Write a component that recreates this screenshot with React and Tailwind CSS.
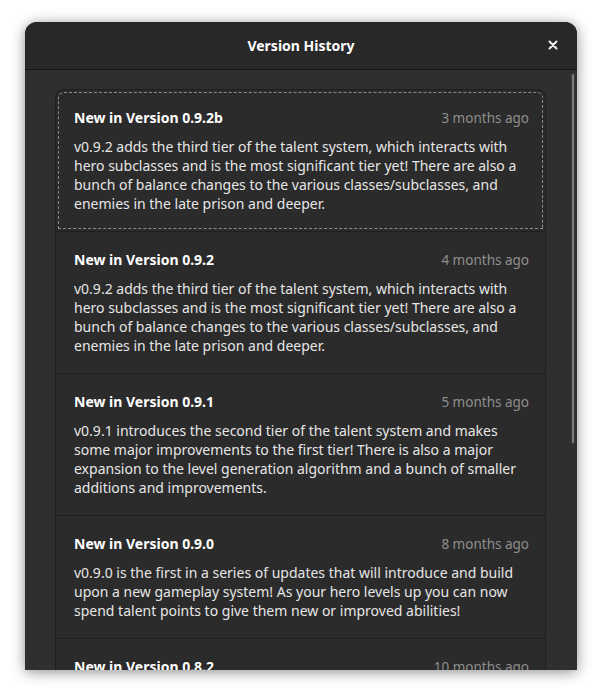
import React from 'react';

const versions = [
  {
    title: 'New in Version 0.9.2b',
    when: '3 months ago',
    body: 'v0.9.2 adds the third tier of the talent system, which interacts with hero subclasses and is the most significant tier yet! There are also a bunch of balance changes to the various classes/subclasses, and enemies in the late prison and deeper.',
    focused: true,
  },
  {
    title: 'New in Version 0.9.2',
    when: '4 months ago',
    body: 'v0.9.2 adds the third tier of the talent system, which interacts with hero subclasses and is the most significant tier yet! There are also a bunch of balance changes to the various classes/subclasses, and enemies in the late prison and deeper.',
  },
  {
    title: 'New in Version 0.9.1',
    when: '5 months ago',
    body: 'v0.9.1 introduces the second tier of the talent system and makes some major improvements to the first tier! There is also a major expansion to the level generation algorithm and a bunch of smaller additions and improvements.',
  },
  {
    title: 'New in Version 0.9.0',
    when: '8 months ago',
    body: 'v0.9.0 is the first in a series of updates that will introduce and build upon a new gameplay system! As your hero levels up you can now spend talent points to give them new or improved abilities!',
  },
  {
    title: 'New in Version 0.8.2',
    when: '10 months ago',
    body: 'v0.8.2 adds a bunch of new content and balance changes to the game, including new items and enemy variants.',
  },
];

const VersionRow = ({ v, first }) => (
  <div
    className={`pl-[18px] pr-[16px] pt-[17px] pb-[18px] ${first ? '' : 'border-t border-[#1f1f1f]'} ${
      v.focused ? 'rounded-t-[8px] outline-1 outline-dashed outline-[#8a8a8a] outline-offset-[-3px]' : ''
    }`}
  >
    <div className="flex items-baseline justify-between h-[22px] leading-[22px]">
      <span className="text-[14px] font-bold text-white">{v.title}</span>
      <span className="text-[13.5px] text-[#8e8e8e]">{v.when}</span>
    </div>
    <p className="mt-[8px] text-[14px] leading-[19px] text-[#e6e6e6]">{v.body}</p>
  </div>
);

export default function App() {
  return (
    <div className="min-h-[699px] bg-white pt-[22px] px-[25px]" style={{ fontFamily: '"Noto Sans", sans-serif' }}>
      <div className="relative h-[648px] rounded-t-[12px] bg-[#2f2f2f] overflow-hidden shadow-[0_2px_14px_rgba(0,0,0,0.45)] flex flex-col">
        {/* Header bar */}
        <div className="relative h-[48px] shrink-0 bg-[#282828] border-b border-[#161616] flex items-center justify-center">
          <span className="text-[14px] font-bold text-white">Version History</span>
          <button className="absolute right-[19px] top-[18px] text-white">
            <svg width="10" height="10" viewBox="0 0 10 10">
              <path d="M1.5 1.5 L8.5 8.5 M8.5 1.5 L1.5 8.5" stroke="#f2f2f2" strokeWidth="2" strokeLinecap="round" />
            </svg>
          </button>
        </div>

        {/* Scroll area */}
        <div className="relative flex-1 overflow-hidden pt-[19px] pl-[30px] pr-[31px]">
          <div className="rounded-t-[8px] border border-[#1f1f1f] bg-[#2b2b2b]">
            {versions.map((v, i) => (
              <VersionRow key={v.title} v={v} first={i === 0} />
            ))}
          </div>
          {/* Overlay scrollbar */}
          <div className="absolute right-[2px] top-[3px] h-[371px] w-[4px] rounded-full bg-[#7c7c7c] border border-[#3a3a3a]" />
        </div>
      </div>
    </div>
  );
}
